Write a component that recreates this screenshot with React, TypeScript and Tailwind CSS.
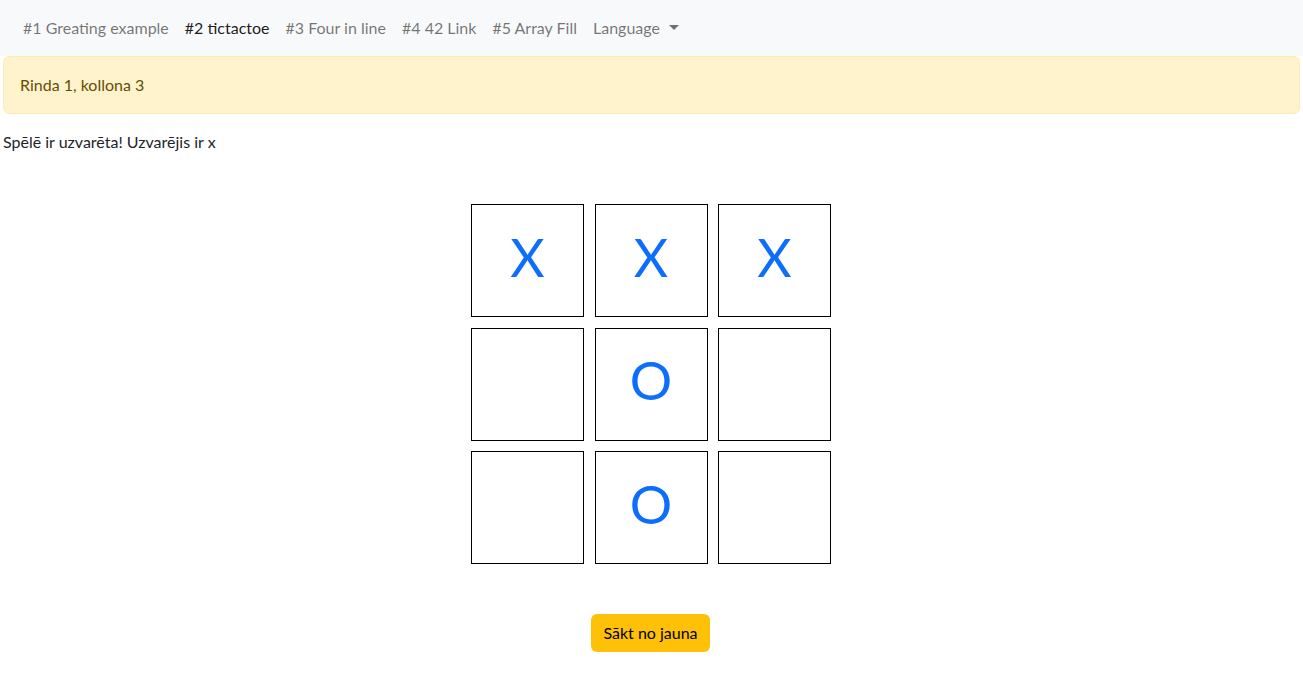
const board = [
  ['X', 'X', 'X'],
  ['', 'O', ''],
  ['', 'O', ''],
]

const links = ['#1 Greating example', '#2 tictactoe', '#3 Four in line', '#4 42 Link', '#5 Array Fill']

export default function App() {
  return (
    <div className="min-h-screen bg-white text-[#212529] text-[16px] leading-6" style={{ fontFamily: 'Lato, "Liberation Sans", sans-serif' }}>
      {/* Navbar */}
      <nav className="bg-[#f8f9fa] h-[56px] flex items-center px-[15px]">
        {links.map((l, i) => (
          <a
            key={l}
            className={`px-2 py-2 ${i === 1 ? 'text-black/90' : 'text-black/55'}`}
          >
            {l}
          </a>
        ))}
        <a className="px-2 py-2 text-black/55 flex items-center">
          Language
          <span className="ml-[9px] inline-block w-0 h-0 border-x-[5px] border-x-transparent border-t-[5px] border-t-black/55 translate-y-[-1px]" />
        </a>
      </nav>

      <main className="px-[3px]">
        {/* Alert */}
        <div className="bg-[#fff3cd] border border-[#ffecb5] text-[#664d03] rounded-md px-4 py-4 mb-4">
          Rinda 1, kollona 3
        </div>

        <p>Spēlē ir uzvarēta! Uzvarējis ir x</p>

        {/* Board */}
        <div className="flex justify-center mt-[50px] -ml-[1px]">
          <div className="grid grid-cols-[113px_113px_113px] gap-[10.5px]">
            {board.flat().map((c, i) => (
              <button
                key={i}
                className="w-[113px] h-[113px] pb-[9px] border border-black bg-white text-[#0d6efd] text-[53px] leading-none flex items-center justify-center"
              >
                {c}
              </button>
            ))}
          </div>
        </div>

        <div className="flex justify-center mt-[50px]">
          <button className="bg-[#ffc107] text-black rounded-md px-[12px] h-[38px] ml-[-2px]">Sākt no jauna</button>
        </div>
      </main>
    </div>
  )
}
